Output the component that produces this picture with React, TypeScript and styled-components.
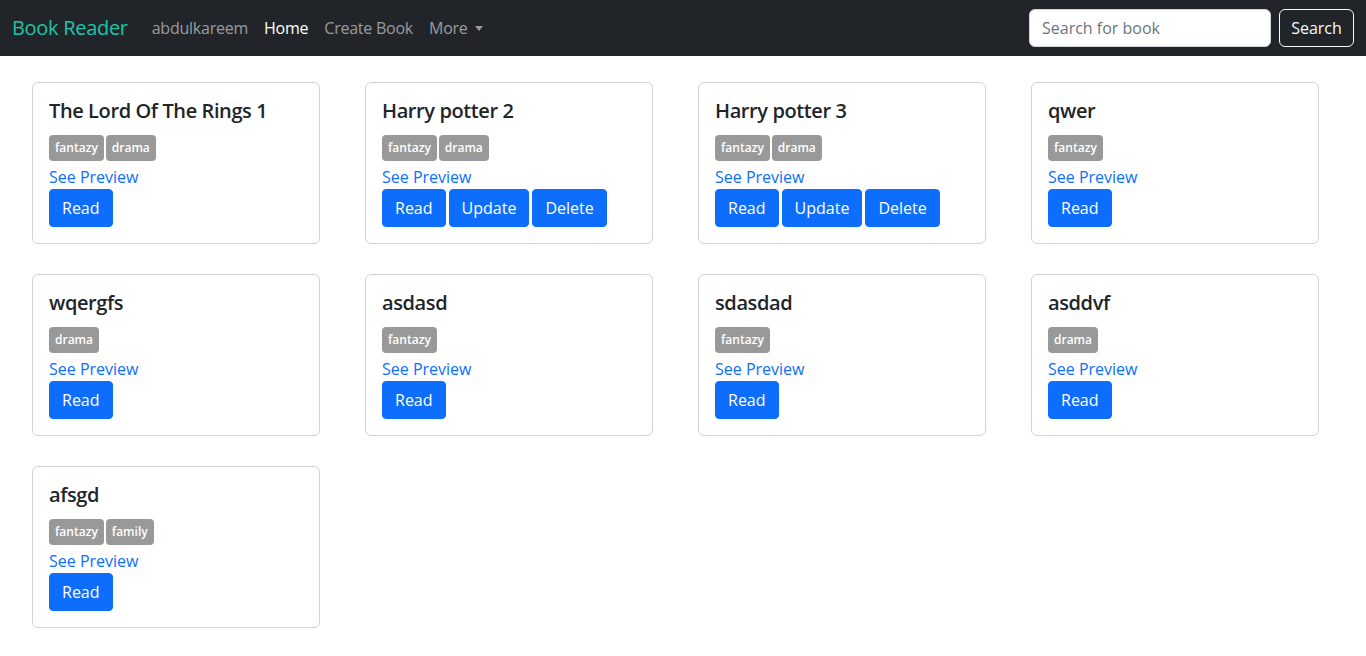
import * as React from "react"
import styled, { createGlobalStyle } from "styled-components"

const GlobalStyle = createGlobalStyle`
    body {
        margin: 0;
        background: #fff;
        font-family: "Open Sans", "Liberation Sans", sans-serif;
        font-size: 16px;
        line-height: 1.5;
        color: #212529;
    }
    * {
        box-sizing: border-box;
    }
`

const Navbar = styled.nav`
    display: flex;
    align-items: center;
    height: 56px;
    padding: 0 12px;
    background: #212529;
`

const Brand = styled.a`
    font-size: 20px;
    color: #20c4a8;
    text-decoration: none;
    margin-right: 16px;
    line-height: 30px;
    padding: 5px 0;
    letter-spacing: -0.015em;
`

const NavLinks = styled.ul`
    display: flex;
    list-style: none;
    margin: 0;
    padding: 0;
    flex: 1;
    letter-spacing: -0.015em;
`

const NavLink = styled.a<{ $active?: boolean }>`
    display: flex;
    align-items: center;
    padding: 8px;
    color: ${(p) => (p.$active ? "#fff" : "rgba(255, 255, 255, 0.55)")};
    text-decoration: none;
`

const Caret = styled.span`
    display: inline-block;
    margin-left: 7px;
    border-top: 5px solid;
    border-left: 4px solid transparent;
    border-right: 4px solid transparent;
`

const SearchForm = styled.form`
    display: flex;
    gap: 8px;
`

const SearchInput = styled.input`
    width: 242px;
    height: 38px;
    padding: 6px 12px;
    font: inherit;
    color: #212529;
    background: #fff;
    border: 1px solid #ced4da;
    border-radius: 6px;

    &::placeholder {
        color: #6c757d;
    }
`

const OutlineButton = styled.button`
    width: 75px;
    height: 38px;
    padding: 6px 0;
    font: inherit;
    color: #f8f9fa;
    background: transparent;
    border: 1px solid #f8f9fa;
    border-radius: 6px;
`

const Grid = styled.main`
    display: grid;
    grid-template-columns: repeat(4, 288px);
    column-gap: 45px;
    row-gap: 30px;
    padding: 26px 32px;
`

const Card = styled.div`
    display: flex;
    flex-direction: column;
    align-items: flex-start;
    padding: 16px;
    border: 1px solid rgba(0, 0, 0, 0.175);
    border-radius: 6px;
`

const Title = styled.h5`
    margin: 0 0 8px;
    font-size: 20px;
    font-weight: 600;
    letter-spacing: -0.02em;
    line-height: 1.2;
`

const Tags = styled.div`
    display: flex;
    gap: 2px;
    margin-top: 4px;
`

const Badge = styled.span`
    display: inline-block;
    height: 26px;
    padding: 0 6px;
    font-size: 12px;
    font-weight: 600;
    line-height: 26px;
    color: #fff;
    background: #999;
    border-radius: 4px;
`

const PreviewLink = styled.a`
    color: #0d6efd;
    text-decoration: none;
    margin-top: 4px;
`

const Actions = styled.div`
    display: flex;
    gap: 3px;
`

const Button = styled.button`
    height: 38px;
    padding: 6px 12px;
    font: inherit;
    color: #fff;
    background: #0d6efd;
    border: 1px solid #0d6efd;
    border-radius: 4px;
`

type Book = { title: string; tags: string[]; own?: boolean }

const books: Book[] = [
    { title: "The Lord Of The Rings 1", tags: ["fantazy", "drama"] },
    { title: "Harry potter 2", tags: ["fantazy", "drama"], own: true },
    { title: "Harry potter 3", tags: ["fantazy", "drama"], own: true },
    { title: "qwer", tags: ["fantazy"] },
    { title: "wqergfs", tags: ["drama"] },
    { title: "asdasd", tags: ["fantazy"] },
    { title: "sdasdad", tags: ["fantazy"] },
    { title: "asddvf", tags: ["drama"] },
    { title: "afsgd", tags: ["fantazy", "family"] },
]

export default function App() {
    return (
        <>
            <GlobalStyle />
            <Navbar>
                <Brand href="#">Book Reader</Brand>
                <NavLinks>
                    <li><NavLink href="#">abdulkareem</NavLink></li>
                    <li><NavLink href="#" $active>Home</NavLink></li>
                    <li><NavLink href="#">Create Book</NavLink></li>
                    <li><NavLink href="#">More<Caret /></NavLink></li>
                </NavLinks>
                <SearchForm onSubmit={(e) => e.preventDefault()}>
                    <SearchInput type="search" placeholder="Search for book" />
                    <OutlineButton type="submit">Search</OutlineButton>
                </SearchForm>
            </Navbar>
            <Grid>
                {books.map((b) => (
                    <Card key={b.title}>
                        <Title>{b.title}</Title>
                        <Tags>
                            {b.tags.map((t) => (
                                <Badge key={t}>{t}</Badge>
                            ))}
                        </Tags>
                        <PreviewLink href="#">See Preview</PreviewLink>
                        <Actions>
                            <Button>Read</Button>
                            {b.own && <Button>Update</Button>}
                            {b.own && <Button>Delete</Button>}
                        </Actions>
                    </Card>
                ))}
            </Grid>
        </>
    )
}
